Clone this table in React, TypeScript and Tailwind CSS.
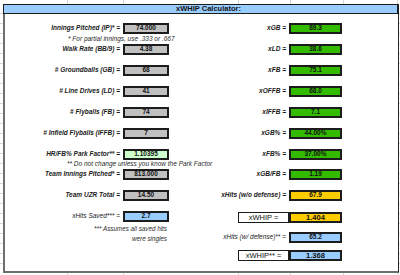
import React from 'react';

type Tone = 'grey' | 'green' | 'yellow' | 'blue' | 'mint';

const tones: Record<Tone, string> = {
  grey: 'bg-[#c0c0c0]',
  green: 'bg-[#33bb00]',
  yellow: 'bg-[#ffcc00]',
  blue: 'bg-[#99ccff]',
  mint: 'bg-[#ccffcc]',
};

function Cell({ value, tone, width }: { value: string; tone: Tone; width: string }) {
  return (
    <div
      className={`${width} h-[11px] shrink-0 border-2 border-[#1c1c1c] ${tones[tone]} flex items-center justify-center text-[6.5px] font-bold leading-none text-[#111]`}
    >
      {value}
    </div>
  );
}

function InputRow({ label, value, tone = 'grey', light, className = '' }: { label: string; value: string; tone?: Tone; light?: boolean; className?: string }) {
  return (
    <div className={`flex items-center gap-[3px] h-[11px] ${className}`}>
      <span className={`flex-1 text-right whitespace-nowrap text-[6.5px] italic leading-none text-[#1a1a1a] ${light ? 'font-normal' : 'font-bold'}`}>
        {label}
      </span>
      <Cell value={value} tone={tone} width="w-[46px]" />
    </div>
  );
}

function OutputRow({ label, value, tone = 'green', light, className = '' }: { label: string; value: string; tone?: Tone; light?: boolean; className?: string }) {
  return (
    <div className={`flex items-center gap-[3px] h-[11px] ${className}`}>
      <span className={`flex-1 text-right whitespace-nowrap text-[6.5px] italic leading-none text-[#1a1a1a] ${light ? 'font-normal' : 'font-bold'}`}>
        {label}
      </span>
      <Cell value={value} tone={tone} width="w-[53px]" />
    </div>
  );
}

function ResultRow({ label, value, tone, className = '' }: { label: string; value: string; tone: Tone; className?: string }) {
  return (
    <div className={`flex justify-end ${className}`}>
      <div className="w-[51px] h-[11px] border border-[#1c1c1c] bg-white flex items-center justify-center text-[7.5px] leading-none text-[#111]">
        {label}
      </div>
      <div
        className={`w-[53px] h-[11px] border-2 border-[#1c1c1c] ${tones[tone]} flex items-center justify-center text-[7.5px] font-bold leading-none text-[#111]`}
      >
        {value}
      </div>
    </div>
  );
}

function Gridlines() {
  const cols = [67, 123, 238, 290, 343, 397];
  const rows = Array.from({ length: 26 }, (_, i) => 13 + i * 10);
  return (
    <svg className="absolute inset-0" width="400" height="275" aria-hidden>
      {cols.map((x) => (
        <g key={x} stroke="#d6d6d6" strokeWidth="1">
          <line x1={x + 0.5} y1="0" x2={x + 0.5} y2="4" />
          <line x1={x + 0.5} y1="272" x2={x + 0.5} y2="275" />
        </g>
      ))}
      {rows.map((y) => (
        <g key={y} stroke="#d6d6d6" strokeWidth="1">
          <line x1="0" y1={y + 0.5} x2="3" y2={y + 0.5} />
          <line x1="399" y1={y + 0.5} x2="400" y2={y + 0.5} />
        </g>
      ))}
    </svg>
  );
}

export default function App() {
  return (
    <div className="relative w-[400px] h-[275px] bg-white overflow-hidden font-['Liberation_Sans',Arial,sans-serif]">
      <Gridlines />
      <div className="relative pl-[3px] pt-[4px]">
        <div className="w-[396px] h-[269px] border-l-2 border-b-2 border-r border-l-[#6e6e6e] border-b-[#6e6e6e] border-r-[#222] bg-white flex flex-col">
          {/* title bar */}
          <div className="h-[10px] -ml-[2px] border border-[#1c1c1c] bg-[#99ccff] flex items-center justify-center pl-[16px] text-[7.5px] font-bold leading-none text-[#111]">
            xWHIP Calculator:
          </div>

          <div className="flex">
            {/* inputs */}
            <div className="w-[164px] flex flex-col">
              <InputRow label="Innings Pitched (IP)* =" value="74.000" className="mt-[9px]" />
              <div className="h-[10px] flex items-center pl-[63px] whitespace-nowrap text-[6.5px] italic leading-none text-[#2a2a2a]">
                * For partial innings, use .333 or .667
              </div>
              <InputRow label="Walk Rate (BB/9) =" value="4.38" />
              <InputRow label="# Groundballs (GB) =" value="68" className="mt-[10px]" />
              <InputRow label="# Line Drives (LD) =" value="41" className="mt-[10px]" />
              <InputRow label="# Flyballs (FB) =" value="74" className="mt-[10px]" />
              <InputRow label="# Infield Flyballs (IFFB) =" value="7" className="mt-[10px]" />
              <InputRow label="HR/FB% Park Factor** =" value="1.10395" tone="mint" className="mt-[10px]" />
              <div className="h-[9px] flex items-center pl-[62px] whitespace-nowrap text-[6.5px] italic leading-none text-[#2a2a2a]">
                ** Do not change unless you know the Park Factor
              </div>
              <InputRow label="Team Innings Pitched* =" value="813.000" />
              <InputRow label="Team UZR Total =" value="14.50" className="mt-[10px]" />
              <InputRow label="xHits Saved*** =" value="2.7" tone="blue" light className="mt-[10px]" />
              <div className="pr-[2px] pt-[2px] flex flex-col items-end text-[6.3px] italic leading-[10px] text-[#2a2a2a]">
                <span>*** Assumes all saved hits</span>
                <span>were singles</span>
              </div>
            </div>

            {/* outputs */}
            <div className="w-[173px] flex flex-col">
              <OutputRow label="xGB =" value="89.3" className="mt-[9px]" />
              <OutputRow label="xLD =" value="38.6" className="mt-[10px]" />
              <OutputRow label="xFB =" value="75.1" className="mt-[10px]" />
              <OutputRow label="xOFFB =" value="68.0" className="mt-[10px]" />
              <OutputRow label="xIFFB =" value="7.1" className="mt-[10px]" />
              <OutputRow label="xGB% =" value="44.00%" className="mt-[10px]" />
              <OutputRow label="xFB% =" value="37.00%" className="mt-[10px]" />
              <OutputRow label="xGB/FB =" value="1.19" className="mt-[9px]" />
              <OutputRow label="xHits (w/o defense) =" value="67.9" tone="yellow" className="mt-[10px]" />
              <ResultRow label="xWHIP =" value="1.404" tone="yellow" className="mt-[11px]" />
              <OutputRow label="xHits (w/ defense)** =" value="65.2" tone="blue" light className="mt-[9px]" />
              <ResultRow label="xWHIP** =" value="1.368" tone="blue" className="mt-[7px]" />
            </div>
          </div>
        </div>
      </div>
    </div>
  );
}
